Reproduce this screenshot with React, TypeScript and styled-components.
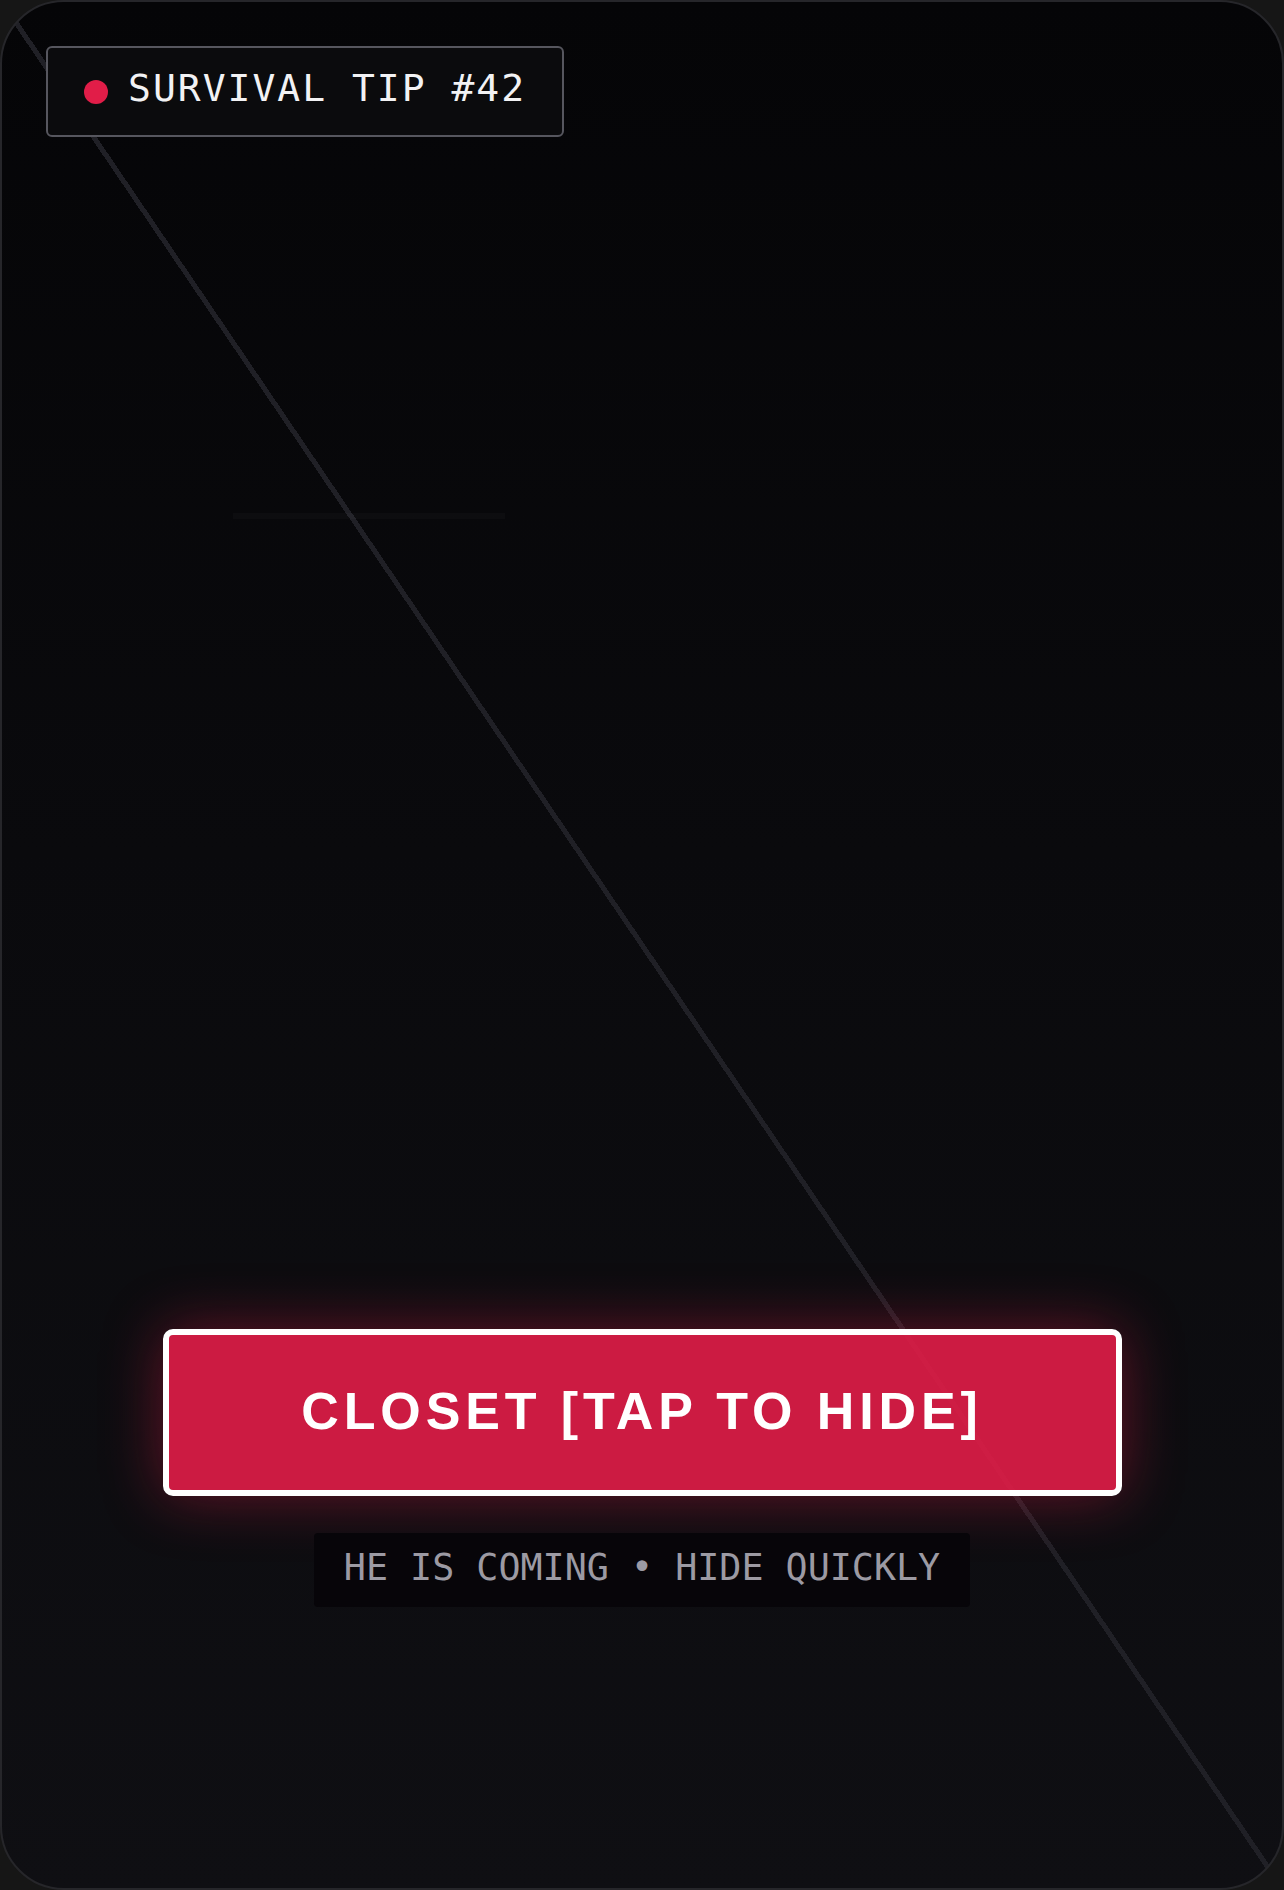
import React from "react";
import styled, { createGlobalStyle } from "styled-components";

const GlobalStyle = createGlobalStyle`
  html, body {
    margin: 0;
    padding: 0;
    background: #161616;
  }
  * {
    box-sizing: border-box;
  }
`;

const Screen = styled.div`
  width: 1284px;
  height: 1890px;
  border: 2px solid #26262a;
  border-radius: 64px;
  overflow: hidden;
  display: flex;
  flex-direction: column;
  padding: 44px 0 281px;
  background:
    linear-gradient(
      to bottom left,
      transparent calc(50% - 2.5px),
      #202026 calc(50% - 2.5px),
      #202026 calc(50% + 2.5px),
      transparent calc(50% + 2.5px)
    ),
    linear-gradient(180deg, #050507 0%, #0a0a0d 45%, #0f0f13 100%);
`;

const Header = styled.div`
  display: flex;
  padding: 0 44px;
`;

const Badge = styled.div`
  display: inline-flex;
  align-items: center;
  gap: 20px;
  height: 91px;
  padding: 0 36px;
  border: 2px solid #56565e;
  border-radius: 6px;
  background: #0b0b0d;
`;

const Dot = styled.span`
  width: 24px;
  height: 24px;
  border-radius: 50%;
  background: #e11d48;
  flex-shrink: 0;
`;

const BadgeText = styled.span`
  font-family: "DejaVu Sans Mono", monospace;
  font-size: 38px;
  letter-spacing: 2px;
  color: #f2f2f4;
  line-height: 1;
  padding-bottom: 7px;
`;

const Shelf = styled.div`
  width: 272px;
  height: 6px;
  margin: 376px 0 0 231px;
  background: rgba(255, 255, 255, 0.025);
`;

const Footer = styled.div`
  margin-top: auto;
  display: flex;
  flex-direction: column;
  align-items: center;
  gap: 37px;
`;

const HideButton = styled.button`
  width: 959px;
  height: 167px;
  display: flex;
  align-items: center;
  justify-content: center;
  border: 6px solid #ffffff;
  border-radius: 10px;
  background: rgba(225, 29, 72, 0.9);
  box-shadow: 0 0 60px rgba(225, 29, 72, 0.42);
  color: #ffffff;
  font-family: "Liberation Sans", Arial, sans-serif;
  font-weight: 700;
  font-size: 52px;
  letter-spacing: 4.9px;
  cursor: pointer;
  padding: 0 0 4px;
`;

const Hint = styled.div`
  height: 74px;
  display: flex;
  align-items: center;
  padding: 0 30px 4px;
  border-radius: 4px;
  background: #070509;
  font-family: "DejaVu Sans Mono", monospace;
  font-size: 36.7px;
  color: #9c9aa3;
  line-height: 1;
`;

export default function App() {
  return (
    <>
      <GlobalStyle />
      <Screen>
        <Header>
          <Badge>
            <Dot />
            <BadgeText>SURVIVAL TIP #42</BadgeText>
          </Badge>
        </Header>
        <Shelf />
        <Footer>
          <HideButton>CLOSET [TAP TO HIDE]</HideButton>
          <Hint>HE IS COMING • HIDE QUICKLY</Hint>
        </Footer>
      </Screen>
    </>
  );
}
